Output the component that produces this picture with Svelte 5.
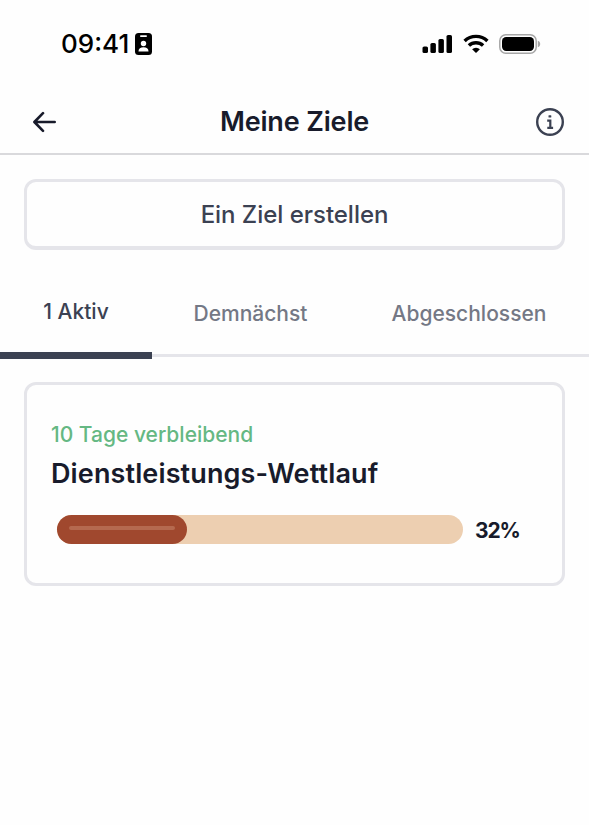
<script>
  let tabs = [
    { id: 'active', label: '1 Aktiv' },
    { id: 'upcoming', label: 'Demnächst' },
    { id: 'done', label: 'Abgeschlossen' }
  ];
  let current = 'active';

  let goal = {
    remaining: '10 Tage verbleibend',
    title: 'Dienstleistungs-Wettlauf',
    percent: 32
  };
</script>

<main>
  <div class="status">
    <div class="clock">
      <span>09:41</span>
      <svg width="17" height="22" viewBox="0 0 17 22">
        <rect width="17" height="22" rx="3.5" fill="#000" />
        <rect x="5" y="2.2" width="7" height="1.8" rx="0.9" fill="#fff" />
        <circle cx="8.5" cy="10.5" r="2.7" fill="#fff" />
        <path d="M3.5 18.4c0-2.7 2-4.1 5-4.1s5 1.4 5 4.1z" fill="#fff" />
      </svg>
    </div>
    <div class="signals">
      <svg width="31" height="20" viewBox="0 0 31 20">
        <rect x="0.5" y="12.5" width="5.5" height="6.5" rx="1.6" />
        <rect x="8.4" y="9" width="5.5" height="10" rx="1.6" />
        <rect x="16.4" y="5" width="5.5" height="14" rx="1.6" />
        <rect x="24.5" y="1" width="5.5" height="18" rx="1.6" />
      </svg>
      <svg class="wifi" width="26" height="20" viewBox="0 0 26 20">
        <g fill="none" stroke="#000" stroke-width="3.4">
          <path d="M1.6 7a16.4 16.4 0 0 1 22.8 0" />
          <path d="M5.9 11.6a10.3 10.3 0 0 1 14.2 0" />
        </g>
        <path d="M13 19l-3.9-3.8a5.8 5.8 0 0 1 7.8 0z" />
      </svg>
      <svg class="battery" width="42" height="20" viewBox="0 0 42 20">
        <rect x="0.8" y="0.8" width="36.4" height="18.4" rx="6" fill="none" stroke="#a6a6a6" stroke-width="1.5" />
        <rect x="3" y="3" width="32" height="14" rx="4.2" />
        <path d="M38.8 6.8c1.7.6 2.4 1.8 2.4 3.2s-.7 2.6-2.4 3.2z" fill="#a6a6a6" />
      </svg>
    </div>
  </div>

  <header>
    <button class="icon" aria-label="Zurück">
      <svg width="24" height="22" viewBox="0 0 24 22">
        <path d="M10 2.2L1.4 11l8.6 8.8M2 11h19.7" fill="none" stroke="#181b2b" stroke-width="2.6" stroke-linecap="round" stroke-linejoin="round" />
      </svg>
    </button>
    <h1>Meine Ziele</h1>
    <button class="icon" aria-label="Info">
      <svg width="28" height="28" viewBox="0 0 28 28" fill="none" stroke="#3b4152" stroke-width="2.4">
        <circle cx="14" cy="14" r="12.8" />
        <path d="M11.2 12.7h3.1v7.1M11.3 19.8h5.8" stroke-width="2.2" />
        <rect x="12.5" y="7.2" width="2.8" height="2.4" rx="0.6" fill="#3b4152" stroke="none" />
      </svg>
    </button>
  </header>

  <button class="create"><span>Ein Ziel erstellen</span></button>

  <nav>
    {#each tabs as tab}
      <button class="tab {tab.id}" class:selected={tab.id === current} on:click={() => current = tab.id}>
        <span>{tab.label}</span>
      </button>
    {/each}
  </nav>

  <section class="card">
    <p class="remaining"><span>{goal.remaining}</span></p>
    <h2><span>{goal.title}</span></h2>
    <div class="progress">
      <div class="track">
        <div class="fill" style="width: {goal.percent}%"><div class="shine"></div></div>
      </div>
      <span class="percent">{goal.percent}%</span>
    </div>
  </section>
</main>

<style>
  :global(body) {
    background: #fefefe;
  }
  main {
    height: 825px;
    overflow: hidden;
    background: #fefefe;
    color: #181b2b;
    font-family: Inter, "Liberation Sans", sans-serif;
  }
  button {
    font: inherit;
    background: none;
    border: 0;
    padding: 0;
    color: inherit;
  }
  svg {
    display: block;
  }
  .status {
    box-sizing: border-box;
    height: 88px;
    padding: 0 48px 0 61px;
    display: flex;
    align-items: center;
    justify-content: space-between;
  }
  .clock {
    display: flex;
    align-items: center;
    gap: 6px;
    color: #000;
    font-size: 26px;
    font-weight: 500;
    line-height: 32px;
  }
  .signals {
    display: flex;
    align-items: center;
  }
  .wifi {
    margin-left: 10px;
  }
  .battery {
    margin-left: 10px;
  }
  header {
    box-sizing: border-box;
    height: 67px;
    padding: 2px 25px 0 33px;
    display: flex;
    align-items: center;
    justify-content: space-between;
    border-bottom: 2px solid #d9d9dc;
  }
  h1 {
    margin: 0 4px 0 0;
    font-size: 27px;
    font-weight: 600;
    line-height: 32px;
    letter-spacing: -0.15px;
  }
  .create {
    box-sizing: border-box;
    display: block;
    width: 541px;
    height: 71px;
    margin: 24px 0 0 24px;
    border: 3px solid #e5e5ea;
    border-bottom-width: 4px;
    border-radius: 12px;
    color: #3b4152;
    font-size: 24px;
    font-weight: 500;
    letter-spacing: -0.03px;
  }
  nav {
    box-sizing: border-box;
    height: 83px;
    margin-top: 26px;
    display: flex;
    align-items: stretch;
  }
  .tab {
    box-sizing: border-box;
    padding-bottom: 4px;
    border-bottom: 3px solid #e5e5ea;
    margin-bottom: 2px;
    color: #747885;
    font-size: 21px;
    font-weight: 500;
  }
  .active {
    width: 152px;
  }
  .upcoming {
    width: 197px;
  }
  .done {
    width: 240px;
  }
  .selected {
    margin-bottom: 0;
    padding-bottom: 5px;
    border-bottom: 7px solid #3b4152;
    color: #3b4152;
  }
  .card {
    box-sizing: border-box;
    width: 541px;
    height: 204px;
    margin: 23px 0 0 24px;
    padding: 35px 24px 0;
    border: 3px solid #e5e5ea;
    border-radius: 12px;
  }
  .remaining {
    margin: 0;
    color: #65b883;
    font-size: 21px;
    font-weight: 500;
    line-height: 30px;
  }
  h2 {
    margin: 5px 0 0;
    font-size: 27px;
    font-weight: 600;
    line-height: 38px;
    letter-spacing: 0.12px;
  }
  .progress {
    display: flex;
    align-items: center;
    gap: 12px;
    margin: 22px 0 0 6px;
  }
  .track {
    width: 406px;
    height: 29px;
    border-radius: 15px;
    background: #edcfb1;
  }
  .fill {
    box-sizing: border-box;
    height: 29px;
    padding: 11px 12px 0;
    border-radius: 15px;
    background: #a0482e;
  }
  .shine {
    height: 4px;
    border-radius: 2px;
    background: #b5694f;
  }
  .percent {
    padding-top: 2px;
    font-size: 21px;
    font-weight: 700;
    letter-spacing: -1.1px;
  }
</style>
